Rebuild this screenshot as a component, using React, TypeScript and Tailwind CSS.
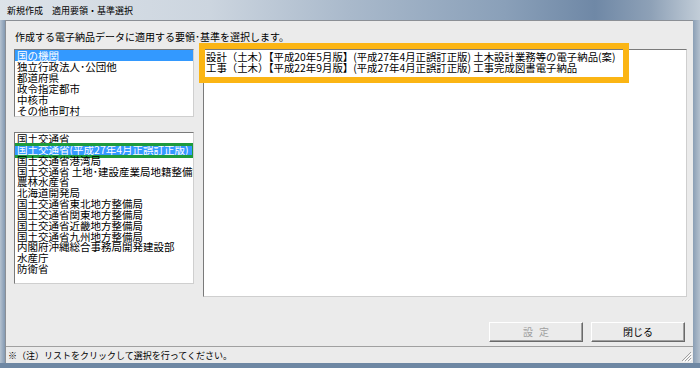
export default function App() {
  const list1 = ["国の機関", "独立行政法人･公団他", "都道府県", "政令指定都市", "中核市", "その他市町村"];
  const list2 = [
    "国土交通省",
    "国土交通省(平成27年4月正誤訂正版)",
    "国土交通省港湾局",
    "国土交通省 土地･建設産業局地籍整備課",
    "農林水産省",
    "北海道開発局",
    "国土交通省東北地方整備局",
    "国土交通省関東地方整備局",
    "国土交通省近畿地方整備局",
    "国土交通省九州地方整備局",
    "内閣府沖縄総合事務局開発建設部",
    "水産庁",
    "防衛省",
  ];
  const list3 = [
    "設計（土木）【平成20年5月版】(平成27年4月正誤訂正版) 土木設計業務等の電子納品(案)",
    "工事（土木）【平成22年9月版】(平成27年4月正誤訂正版) 工事完成図書電子納品",
  ];
  const font = "font-['Noto_Sans_CJK_JP',sans-serif]";
  const listBox =
    "bg-white border border-t-[#7a7a7a] border-l-[#7a7a7a] border-r-[#cfcfcf] border-b-[#cfcfcf] overflow-hidden";
  return (
    <div className={`w-[700px] h-[368px] flex flex-col ${font} text-black overflow-hidden`}>
      {/* title bar */}
      <div className="h-[20px] flex items-center pl-[7px] bg-[linear-gradient(90deg,#dde3e9_0%,#ccd5df_30%,#a9b9cb_50%,#8aa0b9_72%,#6f88a6_85%,#8ea1b7_93%,#c2cdd8_100%)]">
        <span className="text-[9px] leading-none">新規作成　適用要領・基準選択</span>
      </div>
      <div className="flex flex-1 min-h-0">
        <div className="w-[5px] bg-[linear-gradient(90deg,#b4c1cf,#8399b2)]" />
        <div className="flex-1 flex flex-col bg-[#ebebeb] border-t border-l border-t-[#8b8f95] border-l-[#8b8f95]">
          <div className="h-[28px] flex items-center pl-[9px] pt-[3px] text-[10px] leading-none">
            作成する電子納品データに適用する要領･基準を選択します。
          </div>
          <div className="flex pl-[8px] pr-[6px] h-[248px]">
            <div className="w-[180px] flex flex-col">
              <div className={`${listBox} h-[68px]`}>
                {list1.map((t, i) => (
                  <div
                    key={t}
                    className={`h-[11.1px] leading-[11.1px] text-[10.5px] whitespace-nowrap pl-[2px] ${
                      i === 0 ? "bg-[#3399ff] text-white" : ""
                    }`}
                  >
                    {t}
                  </div>
                ))}
              </div>
              <div className={`${listBox} h-[152px] mt-[15px] pt-[1px]`}>
                {list2.map((t, i) => (
                  <div
                    key={t}
                    className={`relative h-[10.85px] leading-[10.85px] text-[10.5px] whitespace-nowrap pl-[2px] ${
                      i === 1 ? "bg-[#3399ff] text-white" : ""
                    }`}
                  >
                    {t}
                    {i === 1 && (
                      <div className="absolute left-[-4px] right-[-2px] top-[-2px] bottom-[-2px] border-[3px] border-[#1e9b3c]" />
                    )}
                  </div>
                ))}
              </div>
            </div>
            <div className="ml-[9px] flex-1 relative bg-white border border-t-[#7a7a7a] border-l-[#7a7a7a] border-r-[#cfcfcf] border-b-[#cfcfcf]">
              <div className="pt-[0.5px]">
                {list3.map((t) => (
                  <div key={t} className="h-[11.4px] leading-[11.4px] text-[10.4px] whitespace-nowrap pl-[2px]">
                    {t}
                  </div>
                ))}
              </div>
              <div className="absolute left-[-5px] top-[-7px] w-[430px] h-[40px] border-[6px] border-[#fbb514]" />
            </div>
          </div>
          <div className="flex justify-end gap-[8px] pr-[8px] mt-[25px]">
            <button className="w-[94px] h-[20px] bg-[#ebebeb] border border-t-white border-l-white border-r-[#6a6a6a] border-b-[#6a6a6a] shadow-[inset_-1px_-1px_0_#a0a0a0] text-[10px] leading-none text-[#a0a0a0] tracking-[6px] pl-[6px]">
              設定
            </button>
            <button className="w-[94px] h-[20px] bg-[#ebebeb] border border-t-white border-l-white border-r-[#6a6a6a] border-b-[#6a6a6a] shadow-[inset_-1px_-1px_0_#a0a0a0] text-[10px] leading-none">
              閉じる
            </button>
          </div>
          <div className="mt-[4px] flex-1 border-t border-t-[#a0a0a0] flex items-center justify-between pl-[2px] relative">
            <span className="text-[9px] leading-none">※（注）リストをクリックして選択を行ってください。</span>
            <svg className="absolute right-[1px] bottom-[1px]" width="12" height="12" viewBox="0 0 12 12">
              <g stroke="#a0a0a0" strokeWidth="1">
                <line x1="11" y1="2" x2="2" y2="11" />
                <line x1="11" y1="5" x2="5" y2="11" />
                <line x1="11" y1="8" x2="8" y2="11" />
              </g>
              <g stroke="#ffffff" strokeWidth="1">
                <line x1="12" y1="3" x2="3" y2="12" />
                <line x1="12" y1="6" x2="6" y2="12" />
                <line x1="12" y1="9" x2="9" y2="12" />
              </g>
            </svg>
          </div>
        </div>
        <div className="w-[7px] bg-[linear-gradient(90deg,#8b9fb5,#b3c0ce)]" />
      </div>
      <div className="h-[5px] bg-[#6e87a3]" />
    </div>
  );
}
